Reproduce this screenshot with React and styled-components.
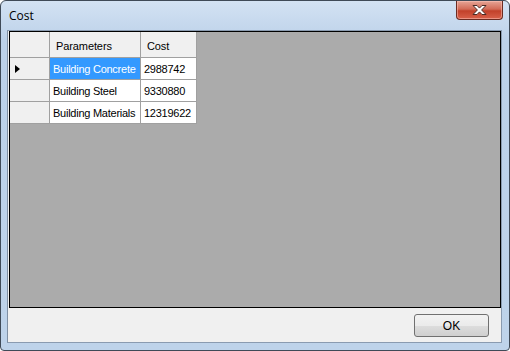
import React from 'react';
import styled, { createGlobalStyle } from "styled-components";

const Global = createGlobalStyle`
  html, body { margin: 0; padding: 0; background: #fff; }
  body { font-family: "Liberation Sans", Arial, sans-serif; }
`;

const rows = [
    { name: "Building Concrete", cost: "2988742", selected: true },
    { name: "Building Steel", cost: "9330880" },
    { name: "Building Materials", cost: "12319622" },
];

function App() {
    return (
        <>
            <Global />
            <Window>
                <TitleBar>
                    <Title>Cost</Title>
                    <CloseButton>
                        <svg width="17" height="12" viewBox="0 0 17 12">
                            <path d="M2 1.5h4l2.5 2.6L11 1.5h4l-4.4 4.5 4.4 4.5h-4L8.5 7.9 6 10.5H2l4.4-4.5z"
                                  fill="#fff" stroke="#4a2a24" strokeWidth="1" strokeLinejoin="round" />
                        </svg>
                    </CloseButton>
                </TitleBar>
                <Client>
                    <GridView>
                        <Table>
                            <HeadCell corner />
                            <HeadCell>Parameters</HeadCell>
                            <HeadCell>Cost</HeadCell>
                            {rows.map((r) => (
                                <React.Fragment key={r.name}>
                                    <RowHeader>{r.selected && <Arrow />}</RowHeader>
                                    <Cell selected={r.selected}>{r.name}</Cell>
                                    <Cell>{r.cost}</Cell>
                                </React.Fragment>
                            ))}
                        </Table>
                    </GridView>
                    <Footer>
                        <OkButton>OK</OkButton>
                    </Footer>
                </Client>
            </Window>
        </>
    )
}

const Window = styled.div`
  box-sizing: border-box;
  width: 510px;
  height: 351px;
  display: flex;
  flex-direction: column;
  border: 1px solid #3f4a57;
  border-radius: 6px 6px 4px 4px;
  background: linear-gradient(#d3e2f3, #bcd1e9 40px, #bed3ea);
  padding: 0 7px 7px 6px;
`;

const TitleBar = styled.div`
  height: 29px;
  display: flex;
  align-items: flex-start;
  justify-content: space-between;
`;

const Title = styled.span`
  font-family: "Open Sans", "Liberation Sans", sans-serif;
  font-size: 12px;
  color: #000;
  margin-top: 6px;
  margin-left: 2px;
`;

const CloseButton = styled.div`
  width: 47px;
  height: 19px;
  margin-right: -1px;
  box-sizing: border-box;
  border: 1px solid #6b2c22;
  border-top: none;
  border-radius: 0 0 4px 4px;
  background: linear-gradient(#e6a596, #d26b57 45%, #c2412a 55%, #d8614a);
  display: flex;
  align-items: center;
  justify-content: center;
  box-shadow: inset 0 0 0 1px rgba(255, 200, 190, 0.5);
`;

const Client = styled.div`
  flex: 1;
  display: flex;
  flex-direction: column;
  border: 1px solid #8a9bb0;
  border-left-color: #7f8fa3;
  background: #f0f0f0;
`;

const GridView = styled.div`
  height: 277px;
  box-sizing: border-box;
  border: 1px solid #000;
  margin-left: 1px;
  background: #ababab;
`;

const Table = styled.div`
  display: grid;
  grid-template-columns: 40px 91px 56px;
  grid-template-rows: 26px 22px 22px 22px;
  width: max-content;
`;

const HeadCell = styled.div`
  box-sizing: border-box;
  background: #f0f0f0;
  border-right: 1px solid #a0a0a0;
  border-bottom: 1px solid #a0a0a0;
  font-size: 11px;
  letter-spacing: -0.1px;
  color: #000;
  display: flex;
  align-items: center;
  padding-left: ${(p) => (p.corner ? 0 : 6)}px;
  padding-top: 3px;
`;

const RowHeader = styled.div`
  box-sizing: border-box;
  background: #f0f0f0;
  border-right: 1px solid #a0a0a0;
  border-bottom: 1px solid #a0a0a0;
  display: flex;
  align-items: center;
  padding-left: 5px;
`;

const Arrow = styled.span`
  width: 0;
  height: 0;
  border-top: 4px solid transparent;
  border-bottom: 4px solid transparent;
  border-left: 5px solid #000;
`;

const Cell = styled.div`
  box-sizing: border-box;
  background: ${(p) => (p.selected ? "#3399ff" : "#fff")};
  color: ${(p) => (p.selected ? "#fff" : "#000")};
  border-right: 1px solid #a0a0a0;
  border-bottom: 1px solid #a0a0a0;
  font-size: 11px;
  letter-spacing: -0.25px;
  display: flex;
  align-items: center;
  padding-left: 3px;
  white-space: nowrap;
  overflow: hidden;
`;

const Footer = styled.div`
  flex: 1;
  display: flex;
  justify-content: flex-end;
  align-items: flex-start;
  padding: 6px 12px 0 0;
`;

const OkButton = styled.button`
  width: 75px;
  height: 23px;
  font-family: "Liberation Sans", Arial, sans-serif;
  font-size: 12px;
  color: #000;
  background: linear-gradient(#f2f2f2, #ebebeb 50%, #dddddd 51%, #cfcfcf);
  border: 1px solid #707070;
  border-radius: 3px;
  padding: 0;
`;

export default App
